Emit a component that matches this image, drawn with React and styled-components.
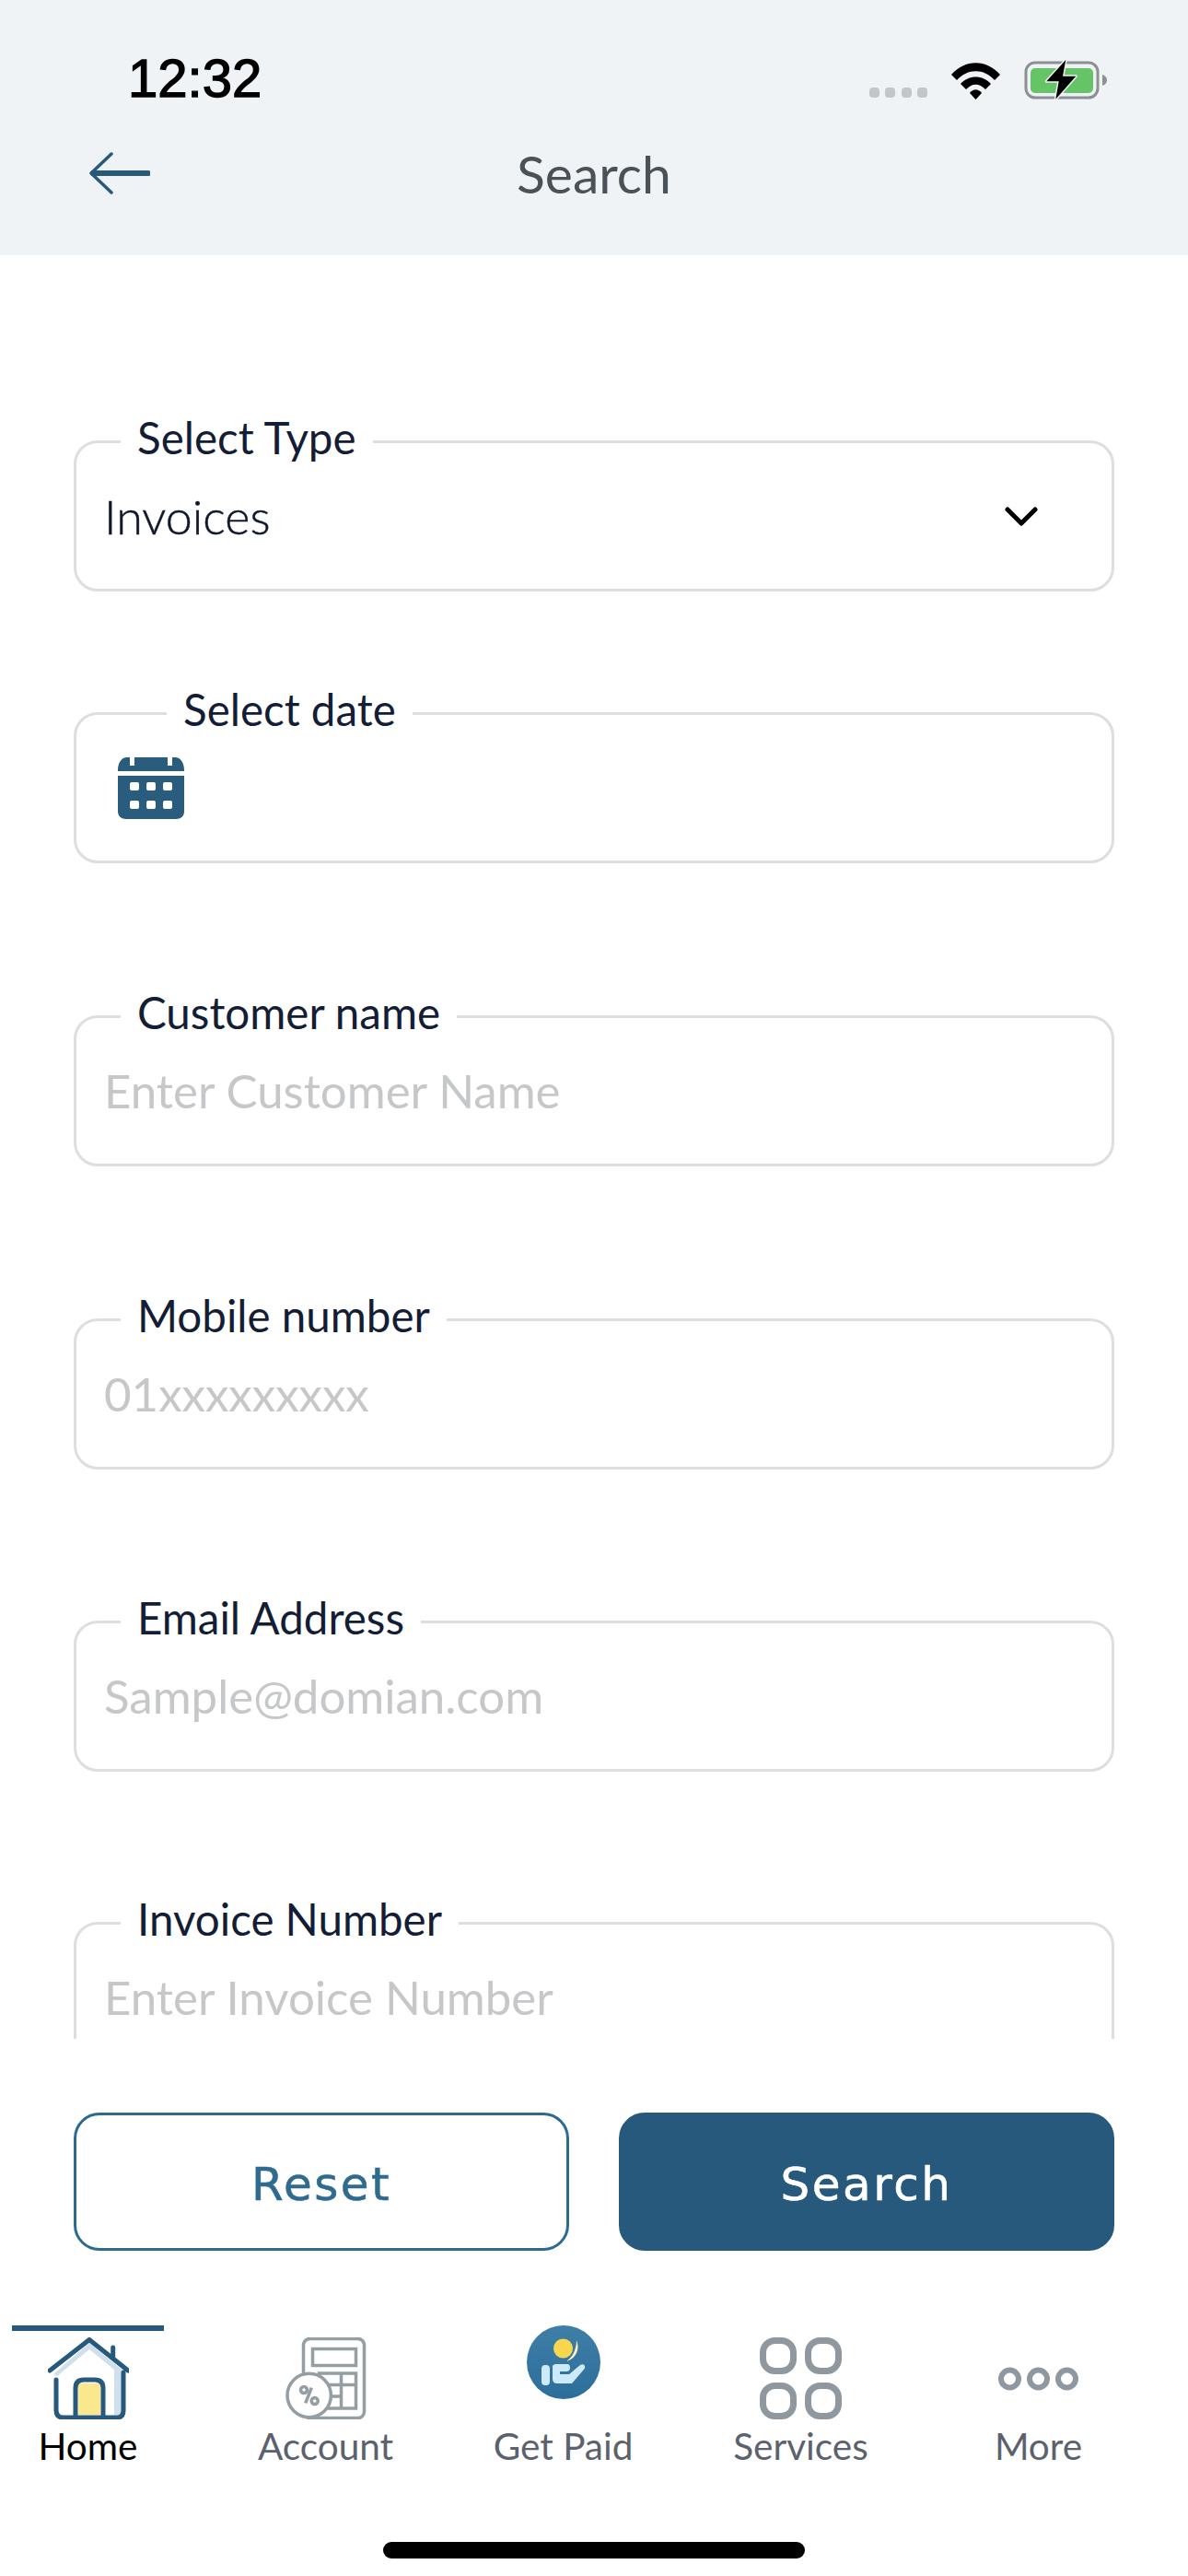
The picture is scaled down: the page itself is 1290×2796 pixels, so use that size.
import React from "react"
import styled, { createGlobalStyle } from "styled-components"

const GlobalStyle = createGlobalStyle`
    html, body {
        margin: 0;
        padding: 0;
        background: #ffffff;
    }
    * {
        box-sizing: border-box;
    }
`

const Screen = styled.div`
    width: 1290px;
    height: 2796px;
    overflow: hidden;
    background: #ffffff;
    display: flex;
    flex-direction: column;
    font-family: "Lato", "Noto Sans", sans-serif;
`

//================================//

const Header = styled.header`
    height: 277px;
    background: #eff3f6;
    flex-shrink: 0;
`
const StatusBar = styled.div`
    height: 108px;
    padding: 62px 87px 0 139px;
    display: flex;
    align-items: flex-end;
    justify-content: space-between;
`
const Clock = styled.span`
    font-family: "Liberation Sans", Arial, sans-serif;
    font-size: 58px;
    font-weight: 400;
    line-height: 46px;
    color: #000000;
    -webkit-text-stroke: 1.4px #000000;
`
const StatusIcons = styled.div`
    display: flex;
    align-items: flex-end;
    gap: 25px;
`
const SignalDots = styled.div`
    display: flex;
    gap: 6.5px;
    margin-bottom: 2px;
`
const SignalDot = styled.span`
    width: 11px;
    height: 11px;
    border-radius: 4px;
    background: #c2c6c9;
`
const NavBar = styled.div`
    margin-top: 49px;
    height: 60px;
    padding: 0 97px;
    display: grid;
    grid-template-columns: 1fr auto 1fr;
    align-items: center;
`
const NavTitle = styled.h1`
    margin: 0;
    font-size: 57px;
    font-weight: 400;
    line-height: 62px;
    color: #4a5157;
`

//================================//

const FormArea = styled.main`
    height: 1936px;
    flex-shrink: 0;
    overflow: hidden;
    padding: 201px 80px 0 80px;
`
const Field = styled.div`
    position: relative;
    height: 164px;
    margin-top: ${(p) => p.$gap}px;
    border: 3px solid #dedede;
    border-radius: 26px;
    padding: 0 80px 0 30px;
    display: flex;
    align-items: center;
    justify-content: space-between;
`
const FieldLabel = styled.label`
    position: absolute;
    top: -34px;
    left: ${(p) => p.$left}px;
    padding: 0 18px;
    background: #ffffff;
    font-size: 47.5px;
    line-height: 56px;
    color: #141d36;
`
const FieldValue = styled.span`
    font-size: ${(p) => (p.$muted ? 51 : 52)}px;
    line-height: 60px;
    font-weight: ${(p) => (p.$muted ? 400 : 300)};
    color: ${(p) => (p.$muted ? "#c6c7c9" : "#10172c")};
    -webkit-text-stroke: ${(p) => (p.$muted ? "0" : "0.5px #10172c")};
`
const DateIconWrap = styled.span`
    margin-left: 15px;
    display: flex;
`

//================================//

const ButtonRow = styled.div`
    margin-top: 80px;
    padding: 0 80px;
    display: flex;
    gap: 54px;
    flex-shrink: 0;
`
const ActionButton = styled.button`
    flex: 1;
    height: 150px;
    border-radius: 28px;
    border: 3px solid ${(p) => (p.$primary ? "#27597c" : "#2c6a8f")};
    background: ${(p) => (p.$primary ? "#27597c" : "#ffffff")};
    color: ${(p) => (p.$primary ? "#ffffff" : "#2f6a8f")};
    font-family: "DejaVu Sans", sans-serif;
    font-size: 50px;
    letter-spacing: 2.5px;
    -webkit-text-stroke: 0.6px ${(p) => (p.$primary ? "#ffffff" : "#2f6a8f")};
    padding: 5px 0 0;
`

//================================//

const TabBar = styled.nav`
    margin-top: 81px;
    padding: 0 80px 0 13px;
    display: flex;
    justify-content: space-between;
    flex-shrink: 0;
`
const Tab = styled.div`
    width: 165px;
    border-top: 6px solid ${(p) => (p.$active ? "#27597c" : "transparent")};
    padding-top: 7px;
    display: flex;
    flex-direction: column;
    align-items: center;
`
const TabIcon = styled.div`
    height: 89px;
    display: flex;
    align-items: center;
    justify-content: center;
`
const RaisedIcon = styled.svg`
    align-self: flex-start;
    margin-top: -13px;
`
const TabLabel = styled.span`
    margin-top: 4px;
    font-size: 40.5px;
    line-height: 50px;
    white-space: nowrap;
    color: ${(p) => (p.$active ? "#000000" : "#5b626d")};
`
const HomeIndicator = styled.div`
    width: 458px;
    height: 18px;
    margin: 79px auto 0;
    border-radius: 9px;
    background: #000000;
    flex-shrink: 0;
`

//================================//

const WifiIcon = () => (
    <svg width="55" height="41" viewBox="0 0 55 41">
        <path d="M1 14 C16 -3 39 -3 54 14 L48 20 C36 7 19 7 7 20 Z" fill="#000" />
        <path d="M11 24 C20 14 35 14 44 24 L38 30 C31 23 24 23 17 30 Z" fill="#000" />
        <path d="M21 34 C25 29 30 29 34 34 L27.5 41 Z" fill="#000" />
    </svg>
)

const BatteryIcon = () => (
    <svg width="91" height="43" viewBox="0 0 91 43">
        <rect x="2" y="3" width="78" height="38" rx="10" fill="none" stroke="#8d9093" strokeWidth="3" />
        <rect x="7" y="9" width="68" height="27" rx="5" fill="#65c466" />
        <path d="M85 16 C88 17 90 19 90 22 C90 25 88 27 85 28 Z" fill="#8d9093" />
        <path d="M45.3 0 L24.3 23.3 L37.7 23.3 L34.3 42.7 L56.3 17.7 L42 17.7 Z" fill="#000" stroke="#eff3f6" strokeWidth="3" paintOrder="stroke" strokeLinejoin="round" />
    </svg>
)

const BackArrow = () => (
    <svg width="66" height="46" viewBox="0 0 66 46" fill="none" stroke="#27597c" strokeLinecap="round" strokeLinejoin="round">
        <path d="M4 23 H64" strokeWidth="6" />
        <path d="M24 2 L2 23 L24 44" strokeWidth="3.5" />
    </svg>
)

const Chevron = () => (
    <svg width="36" height="21" viewBox="0 0 36 21" fill="none" stroke="#000" strokeWidth="5" strokeLinecap="round" strokeLinejoin="round">
        <path d="M3 3 L18 18 L33 3" />
    </svg>
)

const CalendarIcon = () => (
    <svg width="72" height="67" viewBox="0 0 72 67">
        <path d="M0 14 C0 6 4 0 10 0 H13 V9 H18 V0 H54 V9 H59 V0 H62 C68 0 72 6 72 14 V15 H0 Z" fill="#2a5c7e" />
        <path d="M0 20 H72 V59 C72 64 68 67 63 67 H9 C4 67 0 64 0 59 Z" fill="#2a5c7e" />
        {[13, 31, 49].map((x) => [27, 47].map((y) => (
            <rect key={`${x}-${y}`} x={x} y={y} width="10" height="9" rx="2" fill="#ffffff" />
        )))}
    </svg>
)

const HomeIcon = () => (
    <svg width="88" height="89" viewBox="0 0 88 89" fill="none" strokeLinecap="round" strokeLinejoin="round">
        <path d="M6 40 L45 6 L84 38 L84 78 Q84 84 78 84 L72 84 L72 35 L45 13 L10 42 Z" fill="#cfe0ec" />
        <rect x="33" y="50" width="24" height="34" fill="#fbe88e" />
        <g stroke="#27597c" strokeWidth="5">
            <path d="M2 36 L45 2.5 L87 36" />
            <path d="M70.7 11 V21" />
            <path d="M9 46 V79 Q9 87 17 87 H75 Q82 87 82 79 V38" />
            <path d="M30 87 V55 Q30 46 39 46 H51 Q60 46 60 55 V87" />
        </g>
    </svg>
)

const AccountIcon = () => (
    <svg width="88" height="89" viewBox="0 0 88 89" fill="none" stroke="#959ea3" strokeWidth="3.5">
        <rect x="19.5" y="1.5" width="66" height="86" rx="7" />
        <rect x="29.5" y="12.5" width="47" height="18" />
        <rect x="36.5" y="39" width="40" height="38" />
        <path d="M60.5 39 V77 M36.5 51.5 H76.5 M36.5 64 H60.5" />
        <circle cx="25.7" cy="63" r="23.7" fill="#ffffff" />
        <circle cx="20" cy="57" r="3.5" />
        <circle cx="31.7" cy="69" r="3.5" />
        <path d="M28.3 54.7 L21.7 71.3" />
    </svg>
)

const GetPaidIcon = () => (
    <RaisedIcon width="80" height="80" viewBox="0 0 80 80">
        <defs>
            <linearGradient id="paidFill" x1="0" y1="0" x2="0" y2="1">
                <stop offset="0" stopColor="#3f7ea6" />
                <stop offset="1" stopColor="#2c6e9b" />
            </linearGradient>
        </defs>
        <circle cx="40" cy="40" r="40" fill="url(#paidFill)" />
        <circle cx="39.5" cy="25" r="10.5" fill="#f8d64e" />
        <path d="M54 16 C58 25 54 36 43 39 C50 34 54 26 54 16 Z" fill="#fdf3bf" />
        <rect x="16" y="43" width="9" height="22" rx="4" fill="#cdeafb" />
        <path d="M28 45 Q28 42 32 42 H44 Q47 42 47 46 Q47 50 43 50 H36 L36 53 H46 L58 43 Q62 41 63 44 Q64 46 61 49 L49 63 H33 Q28 63 28 58 Z" fill="#cdeafb" />
    </RaisedIcon>
)

const ServicesIcon = () => (
    <svg width="89" height="89" viewBox="0 0 89 89" fill="none" stroke="#8f989f" strokeWidth="7">
        <rect x="3.5" y="3.5" width="33" height="33" rx="13" />
        <rect x="52.5" y="3.5" width="33" height="33" rx="13" />
        <rect x="3.5" y="52.5" width="33" height="33" rx="13" />
        <rect x="52.5" y="52.5" width="33" height="33" rx="13" />
    </svg>
)

const MoreIcon = () => (
    <svg width="87" height="26" viewBox="0 0 87 26" fill="none" stroke="#8f989f" strokeWidth="6">
        <circle cx="12.5" cy="13" r="9.5" />
        <circle cx="43.5" cy="13" r="9.5" />
        <circle cx="74.5" cy="13" r="9.5" />
    </svg>
)

//================================//

const fieldData = [
    { label: "Customer name", left: 48, gap: 165, placeholder: "Enter Customer Name" },
    { label: "Mobile number", left: 48, gap: 165, placeholder: "01xxxxxxxxx" },
    { label: "Email Address", left: 48, gap: 164, placeholder: "Sample@domian.com" },
    { label: "Invoice Number", left: 48, gap: 163, placeholder: "Enter Invoice Number" },
]

const tabData = [
    { label: "Home", Icon: HomeIcon, active: true },
    { label: "Account", Icon: AccountIcon },
    { label: "Get Paid", Icon: GetPaidIcon },
    { label: "Services", Icon: ServicesIcon },
    { label: "More", Icon: MoreIcon },
]

const App = () => {
    return (
        <Screen>
            <GlobalStyle />
            <Header>
                <StatusBar>
                    <Clock>12:32</Clock>
                    <StatusIcons>
                        <SignalDots>
                            <SignalDot />
                            <SignalDot />
                            <SignalDot />
                            <SignalDot />
                        </SignalDots>
                        <WifiIcon />
                        <BatteryIcon />
                    </StatusIcons>
                </StatusBar>
                <NavBar>
                    <BackArrow />
                    <NavTitle>Search</NavTitle>
                </NavBar>
            </Header>

            <FormArea>
                <Field $gap={0}>
                    <FieldLabel $left={48}>Select Type</FieldLabel>
                    <FieldValue>Invoices</FieldValue>
                    <Chevron />
                </Field>
                <Field $gap={131}>
                    <FieldLabel $left={98}>Select date</FieldLabel>
                    <DateIconWrap>
                        <CalendarIcon />
                    </DateIconWrap>
                </Field>
                {fieldData.map((field) => (
                    <Field key={field.label} $gap={field.gap}>
                        <FieldLabel $left={field.left}>{field.label}</FieldLabel>
                        <FieldValue $muted>{field.placeholder}</FieldValue>
                    </Field>
                ))}
            </FormArea>

            <ButtonRow>
                <ActionButton>Reset</ActionButton>
                <ActionButton $primary>Search</ActionButton>
            </ButtonRow>

            <TabBar>
                {tabData.map(({ label, Icon, active }) => (
                    <Tab key={label} $active={active}>
                        <TabIcon>
                            <Icon />
                        </TabIcon>
                        <TabLabel $active={active}>{label}</TabLabel>
                    </Tab>
                ))}
            </TabBar>

            <HomeIndicator />
        </Screen>
    )
}

export default App
